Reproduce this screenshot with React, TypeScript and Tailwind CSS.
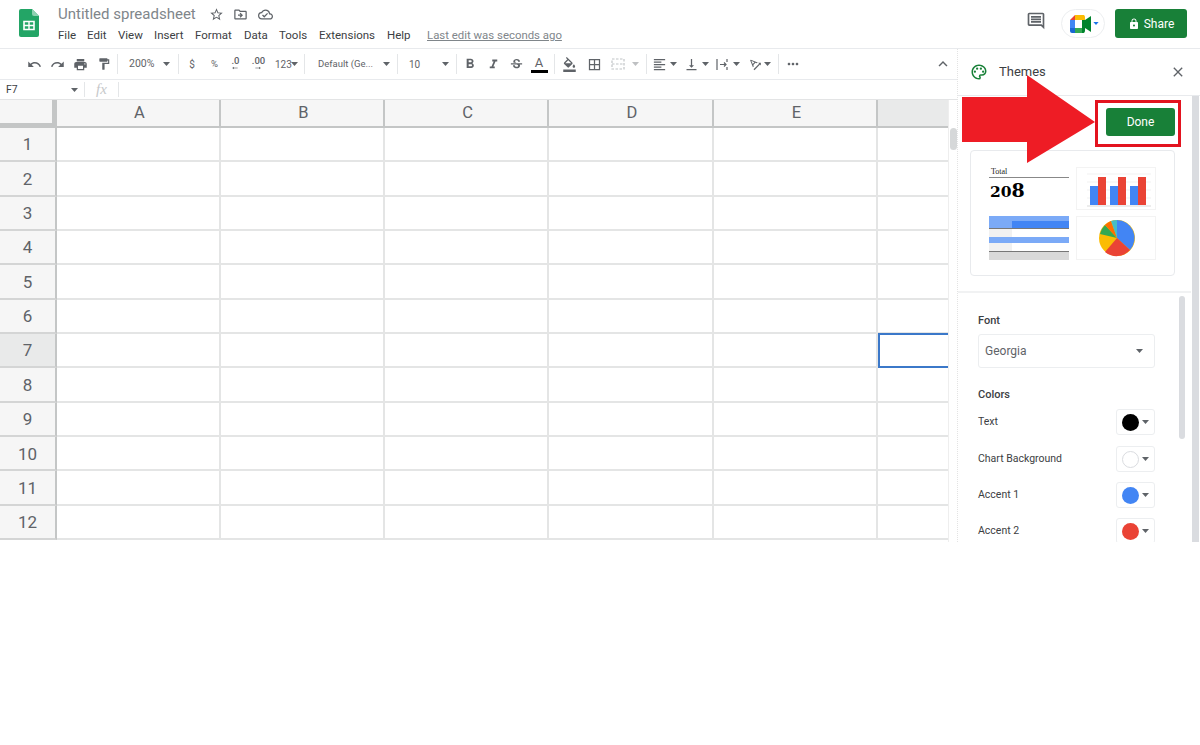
import React from "react";
import {
  MdUndo, MdRedo, MdPrint, MdFormatPaint, MdFormatBold, MdFormatItalic, MdStrikethroughS,
  MdFormatColorFill, MdBorderAll, MdFormatAlignLeft, MdVerticalAlignBottom, MdMoreHoriz,
  MdExpandLess, MdClose, MdOutlinePalette, MdLock, MdStarBorder, MdOutlineDriveFileMove,
  MdOutlineCloudDone, MdOutlineComment, MdTextRotationAngleup, MdArrowRightAlt,
} from "react-icons/md";

const Caret = ({ className = "" }: { className?: string }) => (
  <svg width="7" height="4" viewBox="0 0 7 4" className={className}><path d="M0 0h7L3.5 4z" fill="#5f6368" /></svg>
);
const Sep = () => <div className="w-px h-[20px] bg-[#e4e6e8] shrink-0" />;
const Cell = ({ w, children }: { w: string; children?: React.ReactNode }) => (
  <div className={`${w} shrink-0 flex items-center justify-center text-[#5f6368]`}>{children}</div>
);

const menus = [
  ["File", "w-[29px]"], ["Edit", "w-[31px]"], ["View", "w-[36px]"], ["Insert", "w-[41px]"], ["Format", "w-[49px]"],
  ["Data", "w-[35px]"], ["Tools", "w-[40px]"], ["Extensions", "w-[68px]"], ["Help", "w-[40px]"],
];
const cols = ["A", "B", "C", "D", "E"];
const rows = [1, 2, 3, 4, 5, 6, 7, 8, 9, 10, 11, 12];

function SheetsLogo() {
  return (
    <svg width="20" height="28" viewBox="0 0 20 28">
      <path d="M2 0h11l7 7v19a2 2 0 0 1-2 2H2a2 2 0 0 1-2-2V2a2 2 0 0 1 2-2z" fill="#23a566" />
      <path d="M13 0l7 7h-5a2 2 0 0 1-2-2z" fill="#8ed1b1" />
      <path d="M5 12.5h10v8H5z" fill="none" stroke="#fff" strokeWidth="1.6" />
      <path d="M10 12.5v8M5 16.5h10" stroke="#fff" strokeWidth="1.4" />
    </svg>
  );
}

function MeetLogo() {
  return (
    <svg width="22" height="18" viewBox="0 0 22 18">
      <path d="M5 0h9v5H5z" fill="#fbbc04" />
      <path d="M5 0v5H0z" fill="#ea4335" />
      <path d="M0 5h5v8H0z" fill="#4285f4" />
      <path d="M0 13h5v5H2a2 2 0 0 1-2-2z" fill="#1967d2" />
      <path d="M5 13h9v5H5z" fill="#34a853" />
      <path d="M12 5h3V2a2 2 0 0 0-2-2h-1z" fill="#fbbc04" />
      <path d="M12 9v9h1a2 2 0 0 0 2-2v-3l6 4V1l-6 4v4z" fill="#00832d" />
      <path d="M12 5h3v8h-3z" fill="#00832d" />
    </svg>
  );
}

function BarsThumb() {
  return (
    <svg width="80" height="43" viewBox="0 0 80 43">
      <path d="M10 6h64M10 14h64M10 22h64M10 30h64" stroke="#f1f1f1" />
      <path d="M10 38h64" stroke="#d9d9d9" />
      <path d="M13 18h8v19h-8zM33 18h8v19h-8zM53 18h8v19h-8z" fill="#4285f4" />
      <path d="M21 9h8v28h-8zM41 9h8v28h-8zM61 9h8v28h-8z" fill="#ea4335" />
    </svg>
  );
}

function PieThumb() {
  return (
    <svg width="80" height="44" viewBox="0 0 80 44">
      <circle cx="40" cy="21" r="18" fill="#fbbc04" />
      <path d="M40 21V3A18 18 0 0 1 53 33z" fill="#4285f4" />
      <path d="M40 21L53 33A18 18 0 0 1 28 35z" fill="#ea4335" />
      <path d="M40 21L23 17A18 18 0 0 1 28 8z" fill="#34a853" />
      <path d="M40 21L28 8A18 18 0 0 1 34 4z" fill="#ff6d01" />
      <path d="M40 21L34 4A18 18 0 0 1 40 3z" fill="#46bdc6" />
    </svg>
  );
}

function ColorRow({ label, color, mb }: { label: string; color: string; mb: string }) {
  return (
    <div className={`flex items-center justify-between h-[26px] ${mb}`}>
      <span className="text-[10.5px] text-[#3c4043]">{label}</span>
      <div className="w-[39px] h-[26px] border border-[#eceef0] rounded-[3px] flex items-center pl-[5px] gap-[3px] shrink-0">
        <div className={`w-[17px] h-[17px] rounded-full ${color}`} />
        <Caret />
      </div>
    </div>
  );
}

export default function App() {
  return (
    <div className="w-[1200px] h-[745px] bg-white overflow-hidden relative font-['Roboto',sans-serif]">
      {/* header */}
      <div className="h-[49px] flex border-b border-[#e8eaed]">
        <div className="w-[58px] pl-[19px] pt-[9px] shrink-0"><SheetsLogo /></div>
        <div className="flex-1 pt-[5px]">
          <div className="flex items-center h-[18px] text-[#80868b]">
            <span className="text-[15px] leading-[18px] w-[151px] whitespace-nowrap">Untitled spreadsheet</span>
            <MdStarBorder size={15} className="text-[#5f6368]" />
            <MdOutlineDriveFileMove size={15} className="text-[#5f6368] ml-[9px]" />
            <MdOutlineCloudDone size={15} className="text-[#5f6368] ml-[10px]" />
          </div>
          <div className="flex items-center mt-[5px] h-[16px] text-[11.5px] text-[#3c4043]">
            {menus.map(([m, w]) => <span key={m} className={`${w} whitespace-nowrap`}>{m}</span>)}
            <span className="text-[#80868b] text-[11.4px] underline whitespace-nowrap">Last edit was seconds ago</span>
          </div>
        </div>
        <div className="flex items-start shrink-0 pt-[9px] pr-[13px]">
          <MdOutlineComment size={20} className="text-[#5f6368] mt-[2px] mr-[15px]" />
          <div className="w-[44px] h-[29px] border border-[#eceef0] rounded-full flex items-center pl-[8px] gap-[1px] mr-[10px]">
            <MeetLogo />
            <svg width="6" height="3" viewBox="0 0 7 4"><path d="M0 0h7L3.5 4z" fill="#1a73e8" /></svg>
          </div>
          <div className="w-[72px] h-[29px] bg-[#188038] rounded-[3px] flex items-center justify-center gap-[4px] text-white text-[12px]">
            <MdLock size={12} />
            Share
          </div>
        </div>
      </div>

      {/* main */}
      <div className="h-[493px] flex overflow-hidden">
        <div className="w-[957px] shrink-0 flex flex-col">
          {/* toolbar */}
          <div className="h-[31px] flex items-center pl-[23px] border-b border-[#e8eaed] text-[#5f6368] shrink-0">
            <Cell w="w-[23px]"><MdUndo size={15} /></Cell>
            <Cell w="w-[23px]"><MdRedo size={15} /></Cell>
            <Cell w="w-[23px]"><MdPrint size={15} /></Cell>
            <Cell w="w-[23px]"><MdFormatPaint size={14} /></Cell>
            <div className="w-[2px] shrink-0" /><Sep />
            <div className="w-[11px] shrink-0" />
            <span className="w-[26px] text-[10.5px] shrink-0">200%</span>
            <Cell w="w-[23px]"><Caret /></Cell>
            <Sep />
            <Cell w="w-[26px]"><span className="text-[10px]">$</span></Cell>
            <Cell w="w-[19px]"><span className="text-[9.5px]">%</span></Cell>
            <Cell w="w-[23px]">
              <span className="flex flex-col items-center leading-[8px] text-[9.5px] font-medium">.0<MdArrowRightAlt size={8} className="rotate-180 -mt-[1px] text-[#3c4043]" /></span>
            </Cell>
            <Cell w="w-[23px]">
              <span className="flex flex-col items-center leading-[8px] text-[9.5px] font-medium">.00<MdArrowRightAlt size={8} className="-mt-[1px] text-[#3c4043]" /></span>
            </Cell>
            <span className="w-[15px] text-[10px] shrink-0 ml-[5px] whitespace-nowrap">123</span>
            <Caret className="ml-[1px] mr-[6px] shrink-0" />
            <Sep />
            <div className="w-[13px] shrink-0" />
            <span className="w-[65px] text-[9.5px] shrink-0 whitespace-nowrap">Default (Ge...</span>
            <Caret className="mr-[7px] shrink-0" />
            <Sep />
            <div className="w-[11px] shrink-0" />
            <span className="w-[33px] text-[10px] shrink-0">10</span>
            <Caret className="mr-[7px] shrink-0" />
            <Sep />
            <Cell w="w-[25px]"><MdFormatBold size={16} /></Cell>
            <Cell w="w-[22px]"><MdFormatItalic size={15} /></Cell>
            <Cell w="w-[24px]"><MdStrikethroughS size={15} /></Cell>
            <div className="w-[22px] shrink-0 flex flex-col items-center">
              <span className="text-[13px] leading-[13px] text-[#5f6368]">A</span>
              <div className="w-[17px] h-[3px] bg-black mt-[1px]" />
            </div>
            <div className="w-[4px] shrink-0" /><Sep />
            <Cell w="w-[29px]"><MdFormatColorFill size={15} /></Cell>
            <Cell w="w-[20px]"><MdBorderAll size={15} /></Cell>
            <Cell w="w-[28px]">
              <svg width="14" height="12" viewBox="0 0 14 12" fill="none" stroke="#c0c3c6" strokeWidth="1.2" strokeDasharray="2.5 1.5"><rect x="1" y="1" width="12" height="10" /><path d="M1 6h12" /></svg>
            </Cell>
            <Caret className="mr-[7px] shrink-0 opacity-40" />
            <Sep />
            <div className="w-[5px] shrink-0" />
            <MdFormatAlignLeft size={15} className="shrink-0" />
            <Caret className="ml-[3px] mr-[7px] shrink-0" />
            <MdVerticalAlignBottom size={15} className="shrink-0" />
            <Caret className="ml-[3px] mr-[6px] shrink-0" />
            <svg width="15" height="15" viewBox="0 0 15 15" className="shrink-0" fill="none" stroke="#5f6368" strokeWidth="1.2"><path d="M2 2v11M12 2v3M12 10v3M5 7.5h6M9 5.5l2 2-2 2" /></svg>
            <Caret className="ml-[3px] mr-[8px] shrink-0" />
            <MdTextRotationAngleup size={15} className="shrink-0" />
            <Caret className="ml-[1px] mr-[7px] shrink-0" />
            <Sep />
            <Cell w="w-[28px]"><MdMoreHoriz size={16} /></Cell>
            <div className="flex-1" />
            <MdExpandLess size={18} className="mr-[5px] text-[#5f6368]" />
          </div>

          {/* formula */}
          <div className="h-[20px] flex items-center border-b border-[#e3e4e5] shrink-0">
            <span className="w-[71px] pl-[6px] text-[10.5px] text-[#3c4043]">F7</span>
            <Caret className="shrink-0" />
            <div className="w-[6px] shrink-0" />
            <div className="w-px h-[15px] bg-[#e4e6e8]" />
            <span className="w-[33px] text-center text-[15px] leading-none text-[#c6c8ca] italic font-['Liberation_Serif',serif]">fx</span>
            <div className="w-px h-[15px] bg-[#e4e6e8]" />
          </div>

          {/* grid */}
          <div className="flex-1 flex min-h-0">
            <div className="w-[948px] shrink-0 overflow-hidden">
              <div className="flex h-[28px]">
                <div className="w-[57px] shrink-0 bg-[#f6f6f6] border-r-[5px] border-b-[5px] border-[#c4c6c6]" />
                {cols.map((c, i) => (
                  <div
                    key={c}
                    className={`${i === 3 ? "w-[165px]" : "w-[164px]"} shrink-0 bg-[#f6f6f6] border-r-2 border-b-2 border-[#c4c6c6] flex items-center justify-center pl-[3px] text-[16.5px] text-[#5f6368]`}
                  >
                    {c}
                  </div>
                ))}
                <div className="flex-1 bg-[#e9eaea] border-b-2 border-[#c4c6c6]" />
              </div>
              {rows.map((r) => (
                <div key={r} className="flex h-[34.35px]">
                  <div className={`w-[57px] shrink-0 ${r === 7 ? "bg-[#e9eaea]" : "bg-[#f6f6f6]"} border-r-2 border-b-2 border-r-[#c4c6c6] border-b-[#d4d5d5] flex items-center justify-center pt-[2px] text-[17px] text-[#5f6368]`}>
                    {r}
                  </div>
                  {cols.map((c, i) => (
                    <div
                      key={c}
                      className={`${i === 3 ? "w-[165px]" : "w-[164px]"} shrink-0 border-r-2 border-b-2 border-[#e4e5e5]`}
                    />
                  ))}
                  {r === 7 ? (
                    <div className="flex-1 -mt-px border-2 border-r-0 border-[#3b78c9]" />
                  ) : (
                    <div className="flex-1 border-b-2 border-[#e4e5e5]" />
                  )}
                </div>
              ))}
            </div>
            <div className="flex-1 border-l border-[#eeeeee]">
              <div className="w-[7px] h-[22px] ml-[1px] mt-[28px] bg-[#d6d8d9] rounded-full" />
            </div>
          </div>
        </div>

        {/* side panel */}
        <div className="flex-1 flex flex-col border-l border-dotted border-[#e3e3e3] min-w-0">
          <div className="h-[47px] flex items-center pl-[12px] pr-[14px] border-b border-[#e8eaed] shrink-0">
            <MdOutlinePalette size={18} className="text-[#188038]" />
            <span className="ml-[11px] text-[13px] text-[#3c4043]">Themes</span>
            <div className="flex-1" />
            <MdClose size={16} className="text-[#5f6368]" />
          </div>
          <div className="flex-1 flex min-h-0">
            <div className="w-[233px] shrink-0 flex flex-col">
              <div className="h-[197px] border-b-2 border-[#f1f2f3] shrink-0 pt-[12px]">
                <div className="flex justify-end pr-[16px]">
                  <div className="w-[69px] h-[28px] bg-[#188038] rounded-[3px] flex items-center justify-center text-white text-[12px]">Done</div>
                </div>
                <div className="ml-[12px] mt-[14px] w-[205px] h-[126px] border border-[#e8eaed] rounded-[4px] pl-[18px] pt-[16px]">
                  <div className="grid grid-cols-[80px_80px] gap-x-[7px] gap-y-[6px]">
                    <div className="h-[43px]">
                      <div className="text-[8px] leading-[10px] pl-[2px] text-[#222] font-['Liberation_Serif',serif] border-b border-[#888]">Total</div>
                      <div className="leading-[22px] font-bold pl-[1px] mt-[1px] text-black font-['DejaVu_Serif',serif] text-[19px]">
                        <span className="text-[15.5px]">20</span>8
                      </div>
                    </div>
                    <div className="h-[43px] border border-[#f3f3f3]"><BarsThumb /></div>
                    <div className="h-[44px] flex flex-col">
                      <div className="h-[5px] bg-[#7baaf7]" />
                      <div className="h-[7px] bg-[#7baaf7] flex justify-end">
                        <div className="w-[57px] bg-[#4285f4]" />
                      </div>
                      <div className="h-[1px] bg-[#777]" />
                      <div className="h-[8px] w-[23px] bg-[#f1f1f1]" />
                      <div className="h-[6px] bg-[#7baaf7]" />
                      <div className="h-[8px] w-[23px] bg-[#f1f1f1]" />
                      <div className="h-[1px] bg-[#777]" />
                      <div className="flex-1 bg-[#d9d9d9]" />
                    </div>
                    <div className="h-[44px] border border-[#f3f3f3]"><PieThumb /></div>
                  </div>
                </div>
              </div>
              <div className="flex-1 overflow-hidden flex">
                <div className="w-[221px] shrink-0 pl-[20px] pr-[24px] pt-[21px]">
                  <div className="text-[11px] leading-[13px] font-medium text-[#3c4043]">Font</div>
                  <div className="mt-[7px] h-[34px] w-[177px] border border-[#eceef0] rounded-[3px] flex items-center justify-between pl-[6px] pr-[11px] text-[12px] text-[#5f6368]">
                    Georgia
                    <Caret />
                  </div>
                  <div className="mt-[20px] text-[11px] leading-[13px] font-medium text-[#3c4043]">Colors</div>
                  <div className="mt-[8px] w-[177px]">
                    <ColorRow label="Text" color="bg-black" mb="mb-[11px]" />
                    <ColorRow label="Chart Background" color="bg-white border border-[#dadce0]" mb="mb-[10px]" />
                    <ColorRow label="Accent 1" color="bg-[#4285f4]" mb="mb-[10px]" />
                    <ColorRow label="Accent 2" color="bg-[#ea4335]" mb="mb-[10px]" />
                  </div>
                </div>
                <div className="w-[6px] h-[143px] mt-[3px] bg-[#dadce0] rounded-full shrink-0" />
              </div>
            </div>
            <div className="w-[7px] bg-[#dadce0] shrink-0 ml-[1px]" />
          </div>
        </div>
      </div>

      {/* annotation overlays */}
      <svg width="140" height="92" viewBox="0 0 140 92" className="absolute left-[960px] top-[74px]">
        <path d="M2 23H67V1L135 48 67 89V68H2z" fill="#ee1c25" />
      </svg>
      <div className="absolute left-[1095px] top-[100px] w-[86px] h-[47px] border-[3px] border-[#e3131f]" />
    </div>
  );
}
